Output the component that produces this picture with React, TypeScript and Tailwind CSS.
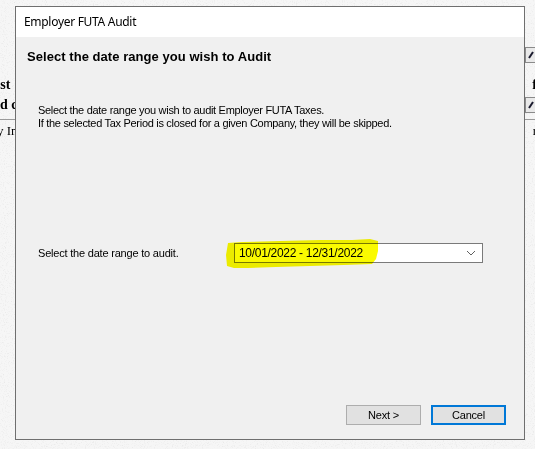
import React from 'react';

const sans = { fontFamily: '"Liberation Sans", Arial, sans-serif' };
const serif = { fontFamily: '"Liberation Serif", "Times New Roman", serif' };

// Grainy paper texture behind the dialog
function Grain() {
  return (
    <svg className="absolute inset-0 h-full w-full" aria-hidden>
      <filter id="grain">
        <feTurbulence type="fractalNoise" baseFrequency="0.9" numOctaves="2" seed="4" />
        <feColorMatrix
          type="matrix"
          values="0 0 0 0 0.55  0 0 0 0 0.55  0 0 0 0 0.55  0 0 0 1.6 -0.85"
        />
      </filter>
      <rect width="100%" height="100%" fill="#f6f6f6" />
      <rect width="100%" height="100%" filter="url(#grain)" opacity="0.5" />
    </svg>
  );
}

function PageSelect() {
  return (
    <div className="flex h-[16px] w-[20px] items-center border border-[#8a8a8a] bg-[#e9e9e9] pl-[2px]">
      <svg width="6" height="8" viewBox="0 0 6 8">
        <path d="M1 7 L5 1" stroke="#1a1a2e" strokeWidth="2" />
      </svg>
    </div>
  );
}

// Bits of the page sitting behind the dialog
function BackgroundPage() {
  return (
    <div className="relative flex flex-col pt-[47px] text-[14px] leading-[16px] text-black" style={serif}>
      <div className="flex justify-end">
        <div className="mr-[-10px]"><PageSelect /></div>
      </div>
      <div className="mt-[14px] flex justify-between font-bold">
        <span className="ml-[-6px]">est</span>
        <span className="mr-[-2px]">f</span>
      </div>
      <div className="mt-[4px] flex items-center justify-between">
        <span className="font-bold">d c</span>
        <div className="mr-[-10px]"><PageSelect /></div>
      </div>
      <div className="mt-[6px] flex justify-between border-t border-[#9a9a9a] pt-[3px] text-[13px]">
        <span className="ml-[-3px]">y In</span>
        <span className="mr-[-2px]">r</span>
      </div>
    </div>
  );
}

function Highlight() {
  return (
    <svg
      className="pointer-events-none absolute left-[220px] top-[237px] mix-blend-multiply"
      width="164"
      height="34"
      viewBox="0 0 164 34"
    >
      <path
        d="M8 6 L22 5 L60 4 L100 3 L132 3 L150 2 L158 4 L158 14 L156 22 L152 27 L124 28 L90 29 L56 30 L28 31 L14 31 L7 29 L6 18 Z"
        fill="#fafa00"
      />
    </svg>
  );
}

function Button({ label, primary }: { label: string; primary?: boolean }) {
  return (
    <div
      className={
        'flex h-[20px] w-[75px] items-center justify-center bg-[#e1e1e1] text-[11px] tracking-[-0.2px] text-black ' +
        (primary ? 'border-2 border-[#0078d7]' : 'border border-[#adadad]')
      }
    >
      {label}
    </div>
  );
}

export default function App() {
  return (
    <div className="relative h-[449px] w-[535px] overflow-hidden" style={sans}>
      <Grain />
      <BackgroundPage />

      {/* dialog window */}
      <div className="absolute left-[15px] top-[6px] flex h-[434px] w-[510px] flex-col border border-[#6f6f6f] bg-[#f0f0f0]">
        <div
          className="flex h-[30px] items-center bg-white pl-[8px] text-[12px] tracking-[-0.3px] text-black"
          style={{ fontFamily: '"Noto Sans", "Open Sans", sans-serif' }}
        >
          Employer FUTA Audit
        </div>

        <div className="relative flex flex-1 flex-col pl-[11px] text-black">
          <div className="mt-[12px] text-[13px] font-bold leading-[15px] tracking-[0.05px]">
            Select the date range you wish to Audit
          </div>

          <div className="mt-[40px] pl-[11px] text-[11px] leading-[13px] tracking-[-0.3px]">
            <div>Select the date range you wish to audit Employer FUTA Taxes.</div>
            <div>If the selected Tax Period is closed for a given Company, they will be skipped.</div>
          </div>

          <div className="mt-[113px] flex items-center pl-[11px] text-[11px]">
            <span className="w-[196px] tracking-[-0.2px]">Select the date range to audit.</span>
            <div className="flex h-[20px] w-[249px] items-center justify-between border border-[#7a7a7a] bg-white pl-[4px] pr-[6px] text-[12px]">
              <span className="tracking-[-0.3px]">10/01/2022 - 12/31/2022</span>
              <svg width="10" height="6" viewBox="0 0 10 6">
                <path d="M1 1 L5 5 L9 1" fill="none" stroke="#606060" strokeWidth="1" />
              </svg>
            </div>
          </div>

          <div className="mt-auto mb-[14px] flex justify-end gap-[10px] pr-[18px]">
            <Button label="Next >" />
            <Button label="Cancel" primary />
          </div>
        </div>
      </div>

      <Highlight />
    </div>
  );
}
